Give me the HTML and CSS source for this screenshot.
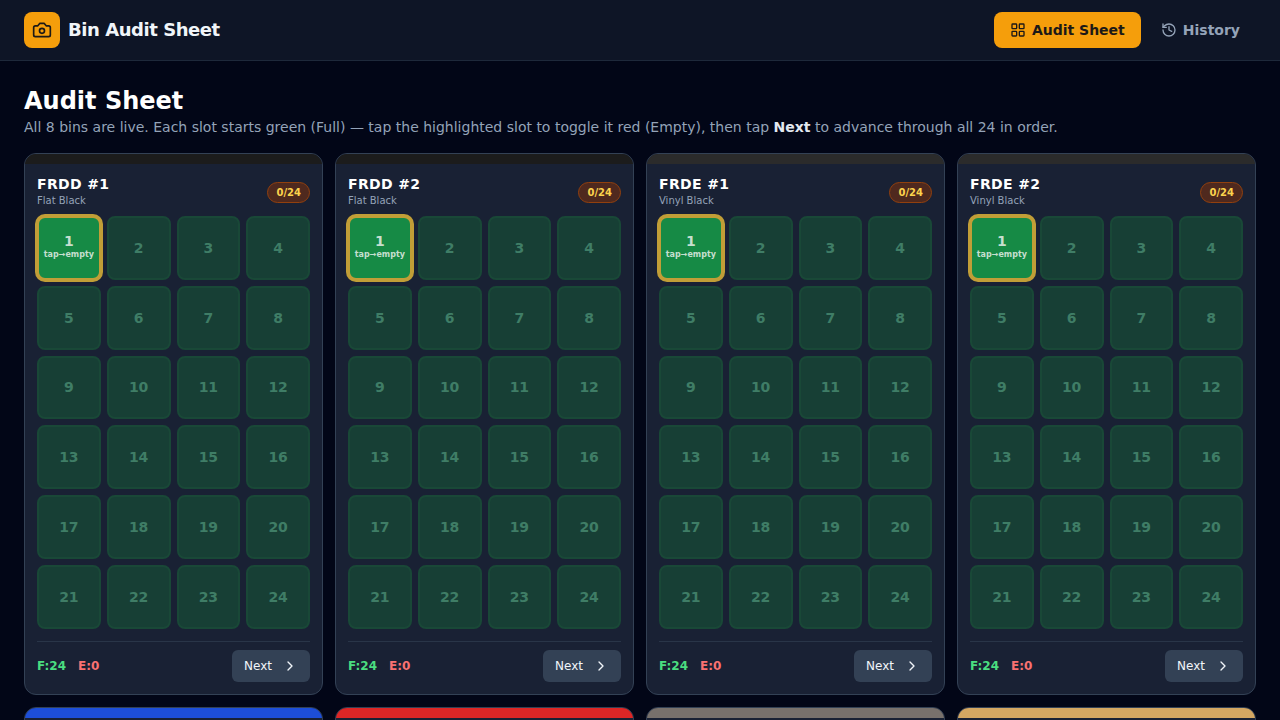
FILE: index.html
```html
<!DOCTYPE html>
<html lang="en">
<head>
  <meta charset="UTF-8">
  <meta name="viewport" content="width=device-width, initial-scale=1.0">
  <title>Bin Audit Sheet</title>
  <link rel="stylesheet" href="styles.css">
</head>
<body>

  <header class="topbar">
    <div class="brand">
      <span class="logo">
        <svg class="icon icon-lg" viewBox="0 0 24 24"><path d="M14.5 4h-5L7 7H4a2 2 0 0 0-2 2v9a2 2 0 0 0 2 2h16a2 2 0 0 0 2-2V9a2 2 0 0 0-2-2h-3l-2.500-3z"/><circle cx="12" cy="13" r="3"/></svg>
      </span>
      <span class="brand-name">Bin Audit Sheet</span>
    </div>
    <nav class="nav">
      <a class="nav-link active" href="#audit">
        <svg class="icon" viewBox="0 0 24 24"><rect x="3" y="3" width="7" height="7" rx="1"/><rect x="14" y="3" width="7" height="7" rx="1"/><rect x="14" y="14" width="7" height="7" rx="1"/><rect x="3" y="14" width="7" height="7" rx="1"/></svg>
        Audit Sheet
      </a>
      <a class="nav-link" href="#history">
        <svg class="icon" viewBox="0 0 24 24"><path d="M3 12a9 9 0 1 0 9-9 9.750 9.750 0 0 0-6.740 2.740L3 8"/><path d="M3 3v5h5"/><path d="M12 7v5l4 2"/></svg>
        History
      </a>
    </nav>
  </header>

  <main class="page" id="audit">
    <h1>Audit Sheet</h1>
    <p class="intro">All 8 bins are live. Each slot starts green (Full) — tap the highlighted slot to toggle it red (Empty), then tap <strong>Next</strong> to advance through all 24 in order.</p>
    <div class="bins" id="bins"></div>
  </main>

  <script src="script.js"></script>
</body>
</html>
```

FILE: styles.css
```css
* {
  box-sizing: border-box;
}
body {
  margin: 0;
  font-family: "DejaVu Sans", sans-serif;
  font-size: 14px;
  line-height: 20px;
  background: #020617;
  color: #f1f5f9;
}
button {
  font-family: inherit;
  cursor: pointer;
}
.icon {
  width: 16px;
  height: 16px;
  flex-shrink: 0;
  fill: none;
  stroke: currentColor;
  stroke-width: 2;
  stroke-linecap: round;
  stroke-linejoin: round;
}
.icon-lg {
  width: 20px;
  height: 20px;
}

/* top bar */
.topbar {
  display: flex;
  justify-content: space-between;
  align-items: center;
  padding: 12px 24px;
  background: #0e1526;
  border-bottom: 1px solid #1e293b;
}
.brand {
  display: flex;
  align-items: center;
  gap: 8px;
}
.logo {
  display: flex;
  align-items: center;
  justify-content: center;
  width: 36px;
  height: 36px;
  border-radius: 8px;
  background: #f59e0b;
  color: #1c1917;
}
.brand-name {
  font-size: 18px;
  font-weight: bold;
  letter-spacing: -0.025em;
}
.nav {
  display: flex;
  gap: 4px;
}
.nav-link {
  display: flex;
  align-items: center;
  gap: 6px;
  padding: 8px 16px;
  border-radius: 8px;
  font-weight: bold;
  text-decoration: none;
  color: #94a3b8;
}
.nav-link.active {
  background: #f59e0b;
  color: #1c1917;
}

/* page */
.page {
  padding: 24px;
}
h1 {
  margin: 0;
  font-size: 24px;
  line-height: 32px;
  color: #fff;
}
.intro {
  margin: 0 0 16px;
  color: #94a3b8;
}
.intro strong {
  color: #e2e8f0;
}
.bins {
  display: grid;
  grid-template-columns: repeat(4, 1fr);
  gap: 12px;
}

/* bin card */
.bin {
  overflow: hidden;
  border: 1px solid #334155;
  border-radius: 12px;
  background: #192134;
}
.stripe {
  height: 10px;
}
.flat-black { background: #1c1c1c; }
.vinyl-black { background: #2b2b2b; }
.blue { background: #1d4ed8; }
.red { background: #dc2626; }
.gray { background: #78716c; }
.tan { background: #d4a762; }
.bin-body {
  padding: 12px;
}
.bin-head {
  display: flex;
  justify-content: space-between;
  align-items: center;
  margin-bottom: 8px;
}
h2 {
  margin: 0;
  font-size: 14px;
  line-height: 17px;
  letter-spacing: 0.025em;
  color: #fff;
}
.finish {
  margin: 0;
  font-size: 10px;
  line-height: 15px;
  color: #94a3b8;
}
.badge {
  padding: 2px 8px;
  border: 1px solid #92400e;
  border-radius: 999px;
  background: #4f291e;
  font-size: 10px;
  line-height: 15px;
  font-weight: bold;
  color: #fcd34d;
}
.slots {
  display: grid;
  grid-template-columns: repeat(4, 1fr);
  gap: 6px;
}
.slot {
  display: flex;
  flex-direction: column;
  align-items: center;
  justify-content: center;
  aspect-ratio: 1;
  min-width: 0;
  padding: 0;
  border: 2px solid #194837;
  border-radius: 8px;
  background: #173f35;
  font-size: 14px;
  line-height: 14px;
  font-weight: bold;
  color: #3f7d66;
}
.slot.empty {
  border-color: #7f1d1d;
  background: #4c1d24;
  color: #b45358;
}
.slot.current {
  border-color: #c19e37;
  box-shadow: 0 0 0 2px #c19e37;
  background: #168a45;
  color: #c5dfcf;
}
.slot.current.empty {
  background: #b91c1c;
}
.slot small {
  font-size: 8px;
  line-height: 14px;
}
.bin-foot {
  display: flex;
  align-items: center;
  gap: 12px;
  margin-top: 12px;
  padding-top: 8px;
  border-top: 1px solid #293548;
  font-size: 12px;
  font-weight: bold;
}
.full-count {
  color: #4ade80;
}
.empty-count {
  color: #f87171;
}
.next {
  display: flex;
  align-items: center;
  gap: 10px;
  height: 32px;
  margin-left: auto;
  padding: 0 12px;
  border: none;
  border-radius: 6px;
  background: #334155;
  font-size: 12px;
  color: #f1f5f9;
}
```

FILE: script.js
```javascript
const SLOT_COUNT = 24;

const bins = [
  { name: 'FRDD #1', finish: 'Flat Black', stripe: 'flat-black' },
  { name: 'FRDD #2', finish: 'Flat Black', stripe: 'flat-black' },
  { name: 'FRDE #1', finish: 'Vinyl Black', stripe: 'vinyl-black' },
  { name: 'FRDE #2', finish: 'Vinyl Black', stripe: 'vinyl-black' },
  { stripe: 'blue' },
  { stripe: 'red' },
  { stripe: 'gray' },
  { stripe: 'tan' }
];

function renderBin(card, bin) {
  const emptyCount = bin.empty.filter(Boolean).length;
  let slots = '';

  for (let i = 0; i < SLOT_COUNT; i++) {
    const isCurrent = i === bin.current;
    const classes = ['slot'];
    if (bin.empty[i]) classes.push('empty');
    if (isCurrent) classes.push('current');
    const hint = bin.empty[i] ? 'tap→full' : 'tap→empty';
    slots += `
      <button type="button" class="${classes.join(' ')}" ${isCurrent ? '' : 'disabled'}>
        <span>${i + 1}</span>${isCurrent ? `<small>${hint}</small>` : ''}
      </button>`;
  }

  card.innerHTML = `
    <div class="stripe ${bin.stripe}"></div>
    <div class="bin-body">
      <div class="bin-head">
        <div>
          <h2>${bin.name}</h2>
          <p class="finish">${bin.finish}</p>
        </div>
        <span class="badge">${bin.current}/${SLOT_COUNT}</span>
      </div>
      <div class="slots">${slots}</div>
      <div class="bin-foot">
        <span class="full-count">F:${SLOT_COUNT - emptyCount}</span>
        <span class="empty-count">E:${emptyCount}</span>
        <button type="button" class="next">Next
          <svg class="icon" viewBox="0 0 24 24"><path d="m9 18 6-6-6-6"/></svg>
        </button>
      </div>
    </div>`;

  const current = card.querySelector('.slot.current');
  if (current) {
    current.addEventListener('click', () => {
      bin.empty[bin.current] = !bin.empty[bin.current];
      renderBin(card, bin);
    });
  }

  card.querySelector('.next').addEventListener('click', () => {
    bin.current = Math.min(bin.current + 1, SLOT_COUNT);
    renderBin(card, bin);
  });
}

bins.forEach(bin => {
  const card = document.createElement('section');
  card.className = 'bin';
  document.getElementById('bins').appendChild(card);

  if (bin.name) {
    bin.current = 0;
    bin.empty = new Array(SLOT_COUNT).fill(false);
    renderBin(card, bin);
  } else {
    card.innerHTML = `<div class="stripe ${bin.stripe}"></div><div class="bin-body"></div>`;
  }
});
```
